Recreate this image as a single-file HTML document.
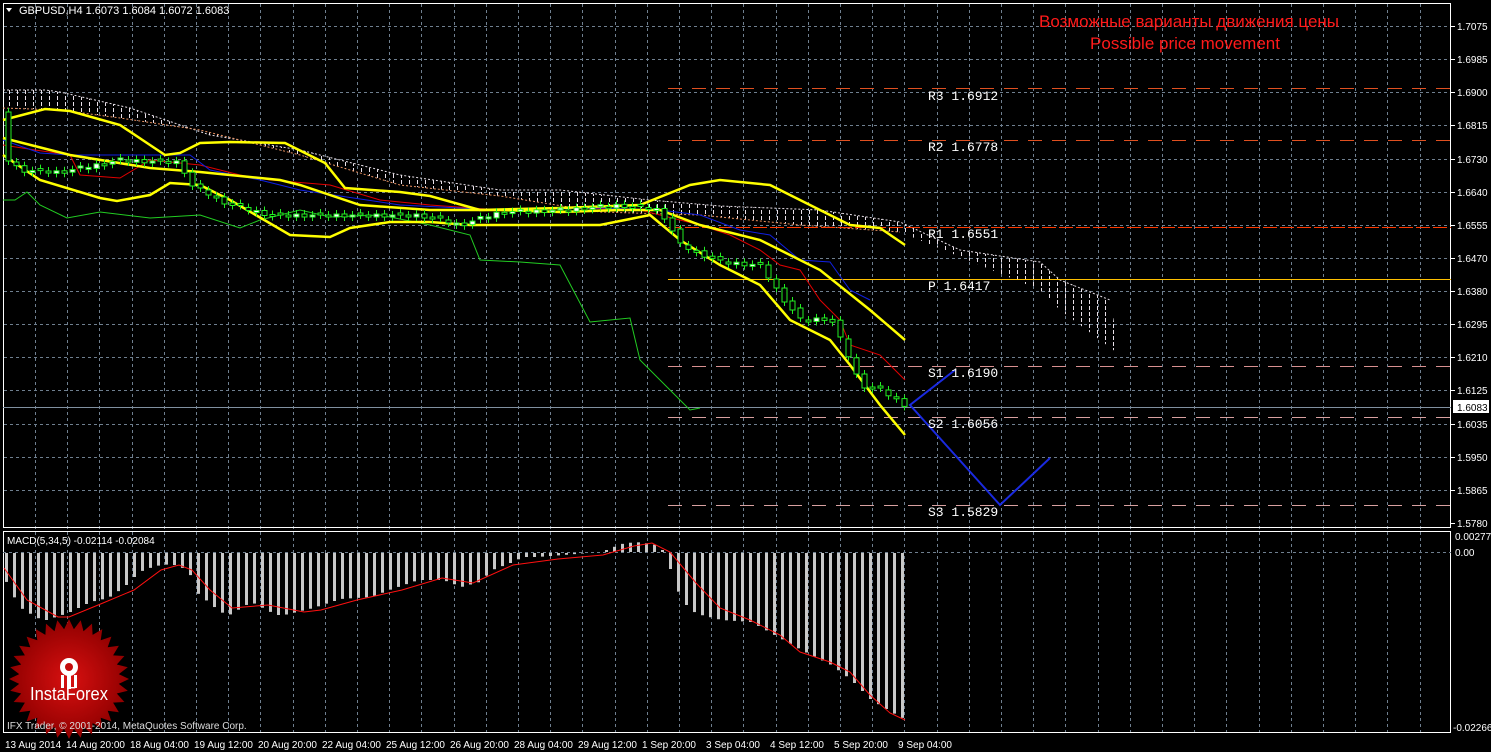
<!DOCTYPE html>
<html><head><meta charset="utf-8"><style>
body{margin:0;background:#000;width:1491px;height:752px;overflow:hidden;font-family:"Liberation Sans",sans-serif}
svg{position:absolute;left:0;top:0}
</style></head><body>
<svg id="s" width="1491" height="752" xmlns="http://www.w3.org/2000/svg">
<defs>
<pattern id="cl" width="8" height="6" patternUnits="userSpaceOnUse"><path d="M1.5 0V4" stroke="#e8e0e8" stroke-width="1"/></pattern>
<radialGradient id="rg"><stop offset="0" stop-color="#d81010"/><stop offset="1" stop-color="#900000"/></radialGradient>
</defs>
<rect width="1491" height="752" fill="#000"/>
<g id="grid" stroke="#6f7f8f" stroke-width="1" stroke-dasharray="3 3"></g>
<rect x="3.5" y="3.5" width="1447" height="524" fill="none" stroke="#fff"/>
<rect x="3.5" y="531.5" width="1447" height="201" fill="none" stroke="#fff"/>
<path d="M3 90 L45 90 60 92 130 108 210 135 300 150 400 175 500 190 560 190 650 200 720 206 820 210 900 222 960 250 1040 262 1060 280 1110 300 1120 355 1060 310 1040 290 900 232 800 225 700 215 600 212 500 196 400 185 300 155 200 130 120 118 60 110 3 108Z" fill="url(#cl)"/>
<polyline points="3,90 45,90 60,92 130,108 210,135 300,150 400,175 500,190 560,190 650,200 720,206 820,210 900,222 960,250 1040,262 1060,280 1110,300" fill="none" stroke="#e8e0e8" stroke-dasharray="2 2"/>
<path d="M3 108 60 110 120 118 200 130 300 155 400 185 500 196 600 212 700 215 800 225 900 232" fill="none" stroke="#e89060" stroke-dasharray="2 2"/>
<g stroke-width="1">
<line x1="668" y1="88.5" x2="1451" y2="88.5" stroke="#e05020" stroke-dasharray="14 10"/>
<line x1="668" y1="140.5" x2="1451" y2="140.5" stroke="#e05020" stroke-dasharray="14 10"/>
<line x1="668" y1="227.5" x2="1451" y2="227.5" stroke="#ff3a00" stroke-dasharray="14 3"/>
<line x1="668" y1="279.5" x2="1451" y2="279.5" stroke="#ffc000"/>
<line x1="668" y1="366.5" x2="1451" y2="366.5" stroke="#d89090" stroke-dasharray="14 10"/>
<line x1="668" y1="417.5" x2="1451" y2="417.5" stroke="#d8a0a0" stroke-dasharray="14 10"/>
<line x1="668" y1="505.5" x2="1451" y2="505.5" stroke="#d8a0a0" stroke-dasharray="14 10"/>
<line x1="3" y1="407.5" x2="1451" y2="407.5" stroke="#8090a0"/>
</g>
<polyline fill="none" stroke="#22cc22" points="3,200 15,200 27,192 40,205 67,218 100,212 150,218 200,215 240,228 260,220 300,210 330,217 380,215 430,225 470,235 480,260 520,262 560,265 590,322 630,318 640,360 670,390 690,410 700,408"/>
<polyline fill="none" stroke="#e00000" points="3,145 35,150 70,155 80,175 120,178 150,160 200,165 240,175 270,180 330,185 380,200 430,205 500,210 580,208 640,210 680,220 700,225 730,235 760,250 780,265 800,270 820,300 840,320 850,345 880,355 905,380"/>
<polyline fill="none" stroke="#1020e0" points="3,140 40,153 70,155 190,155 210,170 260,180 300,190 400,205 500,210 600,208 660,210 700,215 740,230 770,235 800,260 830,262 850,290 870,300"/>
<g fill="none" stroke="#ffff00" stroke-width="2.5">
<polyline points="3,120 45,109 70,111 120,125 150,145 165,155 180,153 200,143 230,142 285,143 325,163 345,188 400,192 430,196 480,210 560,208 640,205 690,185 720,180 770,185 810,205 850,225 880,228 905,245"/>
<polyline points="3,138 70,155 150,168 200,172 280,180 300,185 360,205 430,210 500,210 560,212 620,210 660,210 700,225 760,240 820,270 870,310 905,340"/>
<polyline points="3,155 40,180 100,198 117,201 150,195 170,183 200,185 230,200 290,235 330,237 350,228 390,222 430,222 470,225 530,225 600,225 650,215 680,240 720,265 760,285 790,320 830,340 850,365 880,405 905,435"/>
</g>
<g id="candles"></g>
<polyline fill="none" stroke="#1a2ae0" stroke-width="2" points="955,370 910,405 1000,505 1050,458"/>
<line x1="3" y1="552.5" x2="1451" y2="552.5" stroke="#6f7f8f" stroke-dasharray="3 3"/>
<g id="bars" fill="#c8c8c8"></g>
<polyline fill="none" stroke="#ff1010" points="4,568 27,600 58,617 69,617 103,603 134,590 161,570 179,565 192,570 210,590 232,608 268,605 304,612 321,610 357,600 402,590 442,578 473,583 513,565 558,559 603,555 634,546 652,543 670,552 696,583 720,608 750,620 780,635 800,652 830,662 850,672 870,695 890,713 905,720"/>
<g transform="translate(69,679)">
<polygon id="burst" fill="url(#rg)"/>
<g fill="#fff"><circle cx="0" cy="-12" r="9"/><rect x="-2" y="-6" width="4" height="16"/><rect x="-8" y="-4" width="3" height="13"/><rect x="5" y="-4" width="3" height="13"/><circle cx="0" cy="-12" r="4" fill="#c40c0c"/></g>
<text x="0" y="21" font-size="18" fill="#fff" text-anchor="middle" textLength="78" lengthAdjust="spacingAndGlyphs">InstaForex</text>
</g>
<g font-size="11" fill="#fff">
<text x="19" y="14">GBPUSD,H4  1.6073 1.6084 1.6072 1.6083</text>
<polygon points="6,8 12,8 9,12" fill="#fff"/>
<text x="7" y="544" font-size="10">MACD(5,34,5) -0.02114 -0.02084</text>
<text x="7" y="729" font-size="10" fill="#ddd">IFX Trader, © 2001-2014, MetaQuotes Software Corp.</text>
</g>
<g font-size="17" fill="#ff1a1a" text-anchor="middle"><text x="1189" y="27">Возможные варианты движения цены</text><text x="1185" y="49">Possible price movement</text></g>
<g font-family="Liberation Mono, monospace" font-size="13" fill="#fff">
<text x="928" y="100">R3 1.6912</text><text x="928" y="151">R2 1.6778</text><text x="928" y="238">R1 1.6551</text><text x="928" y="290">P  1.6417</text><text x="928" y="377">S1 1.6190</text><text x="928" y="428">S2 1.6056</text><text x="928" y="516">S3 1.5829</text>
</g>
<g id="ax" font-size="10" fill="#fff"></g>
<rect x="1453" y="400" width="36" height="13" fill="#fff"/>
<text x="1457" y="411" font-size="10" fill="#000">1.6083</text>
<g font-size="10" fill="#fff">
<text x="1455" y="540">0.00277</text><text x="1455" y="556">0.00</text><text x="1453" y="731">-0.02266</text>
</g>
</svg>
<script>
var N="http://www.w3.org/2000/svg",s=document.getElementById('s');
function el(p,t,a,txt){var e=document.createElementNS(N,t);for(var k in a)e.setAttribute(k,a[k]);if(txt)e.textContent=txt;p.appendChild(e);return e;}
var g=document.getElementById('grid');
for(var x=35;x<1451;x+=32.2)el(g,'line',{x1:Math.round(x)+.5,y1:4,x2:Math.round(x)+.5,y2:732});
var lab=['1.7075','1.6985','1.6900','1.6815','1.6730','1.6640','1.6555','1.6470','1.6380','1.6295','1.6210','1.6125','1.6035','1.5950','1.5865','1.5780'];
var ax=document.getElementById('ax');
for(var i=0;i<16;i++){var y=Math.round(26+i*33.13);if(i<15)el(g,'line',{x1:4,y1:y+.5,x2:1450,y2:y+.5});el(ax,'text',{x:1457,y:y+4},lab[i]);el(ax,'line',{x1:1451,y1:y+.5,x2:1455,y2:y+.5,stroke:'#fff'});}
var dates=[[5,'13 Aug 2014'],[66,'14 Aug 20:00'],[130,'18 Aug 04:00'],[194,'19 Aug 12:00'],[258,'20 Aug 20:00'],[322,'22 Aug 04:00'],[386,'25 Aug 12:00'],[450,'26 Aug 20:00'],[514,'28 Aug 04:00'],[578,'29 Aug 12:00'],[642,'1 Sep 20:00'],[706,'3 Sep 04:00'],[770,'4 Sep 12:00'],[834,'5 Sep 20:00'],[898,'9 Sep 04:00']];
dates.forEach(function(d){el(ax,'text',{x:d[0],y:748},d[1]);});
function mk(pts){return function(x){for(var i=1;i<pts.length;i++)if(x<=pts[i][0]){var a=pts[i-1],b=pts[i];return a[1]+(b[1]-a[1])*(x-a[0])/(b[0]-a[0]);}return pts[pts.length-1][1];};}
var price=mk([[3,130],[8,160],[20,170],[60,172],[120,160],[180,162],[190,185],[230,205],[270,215],[350,215],[420,215],[460,225],[500,212],[560,210],[620,205],[660,210],[680,245],[720,262],[760,265],[780,295],[800,320],[830,318],[850,360],[860,385],[880,390],[905,405]]);
var cg=document.getElementById('candles');
var k=0;
for(var x=8;x<=905;x+=8){k++;var a=price(x-8)+((k*7)%5-2),b=price(x)+((k*3)%5-2),t=Math.min(a,b),h=Math.max(2,Math.abs(b-a));var cx=Math.round(x);
el(cg,'line',{x1:cx+.5,y1:t-4,x2:cx+.5,y2:t+h+4,stroke:'#22ee22'});
el(cg,'rect',{x:cx-2,y:t,width:5,height:h,fill:b<a?'#fff':'#000',stroke:'#22ee22'});}
var macd=mk([[4,580],[18,607],[36,618],[45,620],[67,613],[89,602],[107,598],[123,587],[138,572],[154,566],[170,564],[187,570],[196,593],[219,612],[228,615],[250,602],[275,615],[283,615],[312,608],[339,599],[370,597],[388,590],[417,580],[442,580],[460,587],[478,582],[491,570],[509,563],[522,557],[536,557],[562,555],[600,552],[620,544],[634,542],[652,544],[661,550],[667,563],[676,590],[688,610],[700,615],[720,620],[750,622],[800,650],[830,665],[850,680],[870,700],[890,712],[905,720]]);
var bg=document.getElementById('bars');
for(var x=5;x<=907;x+=8){var y=macd(x),cx=Math.round(x);if(y>=552)el(bg,'rect',{x:cx,y:553,width:3,height:y-553});else el(bg,'rect',{x:cx,y:y,width:3,height:552-y});}
var p=[];for(var i=0;i<64;i++){var r=i%2?50:60,a=i*Math.PI/32;p.push((r*Math.sin(a)).toFixed(1)+','+(-r*Math.cos(a)).toFixed(1));}
document.getElementById('burst').setAttribute('points',p.join(' '));
</script>
</body></html>
